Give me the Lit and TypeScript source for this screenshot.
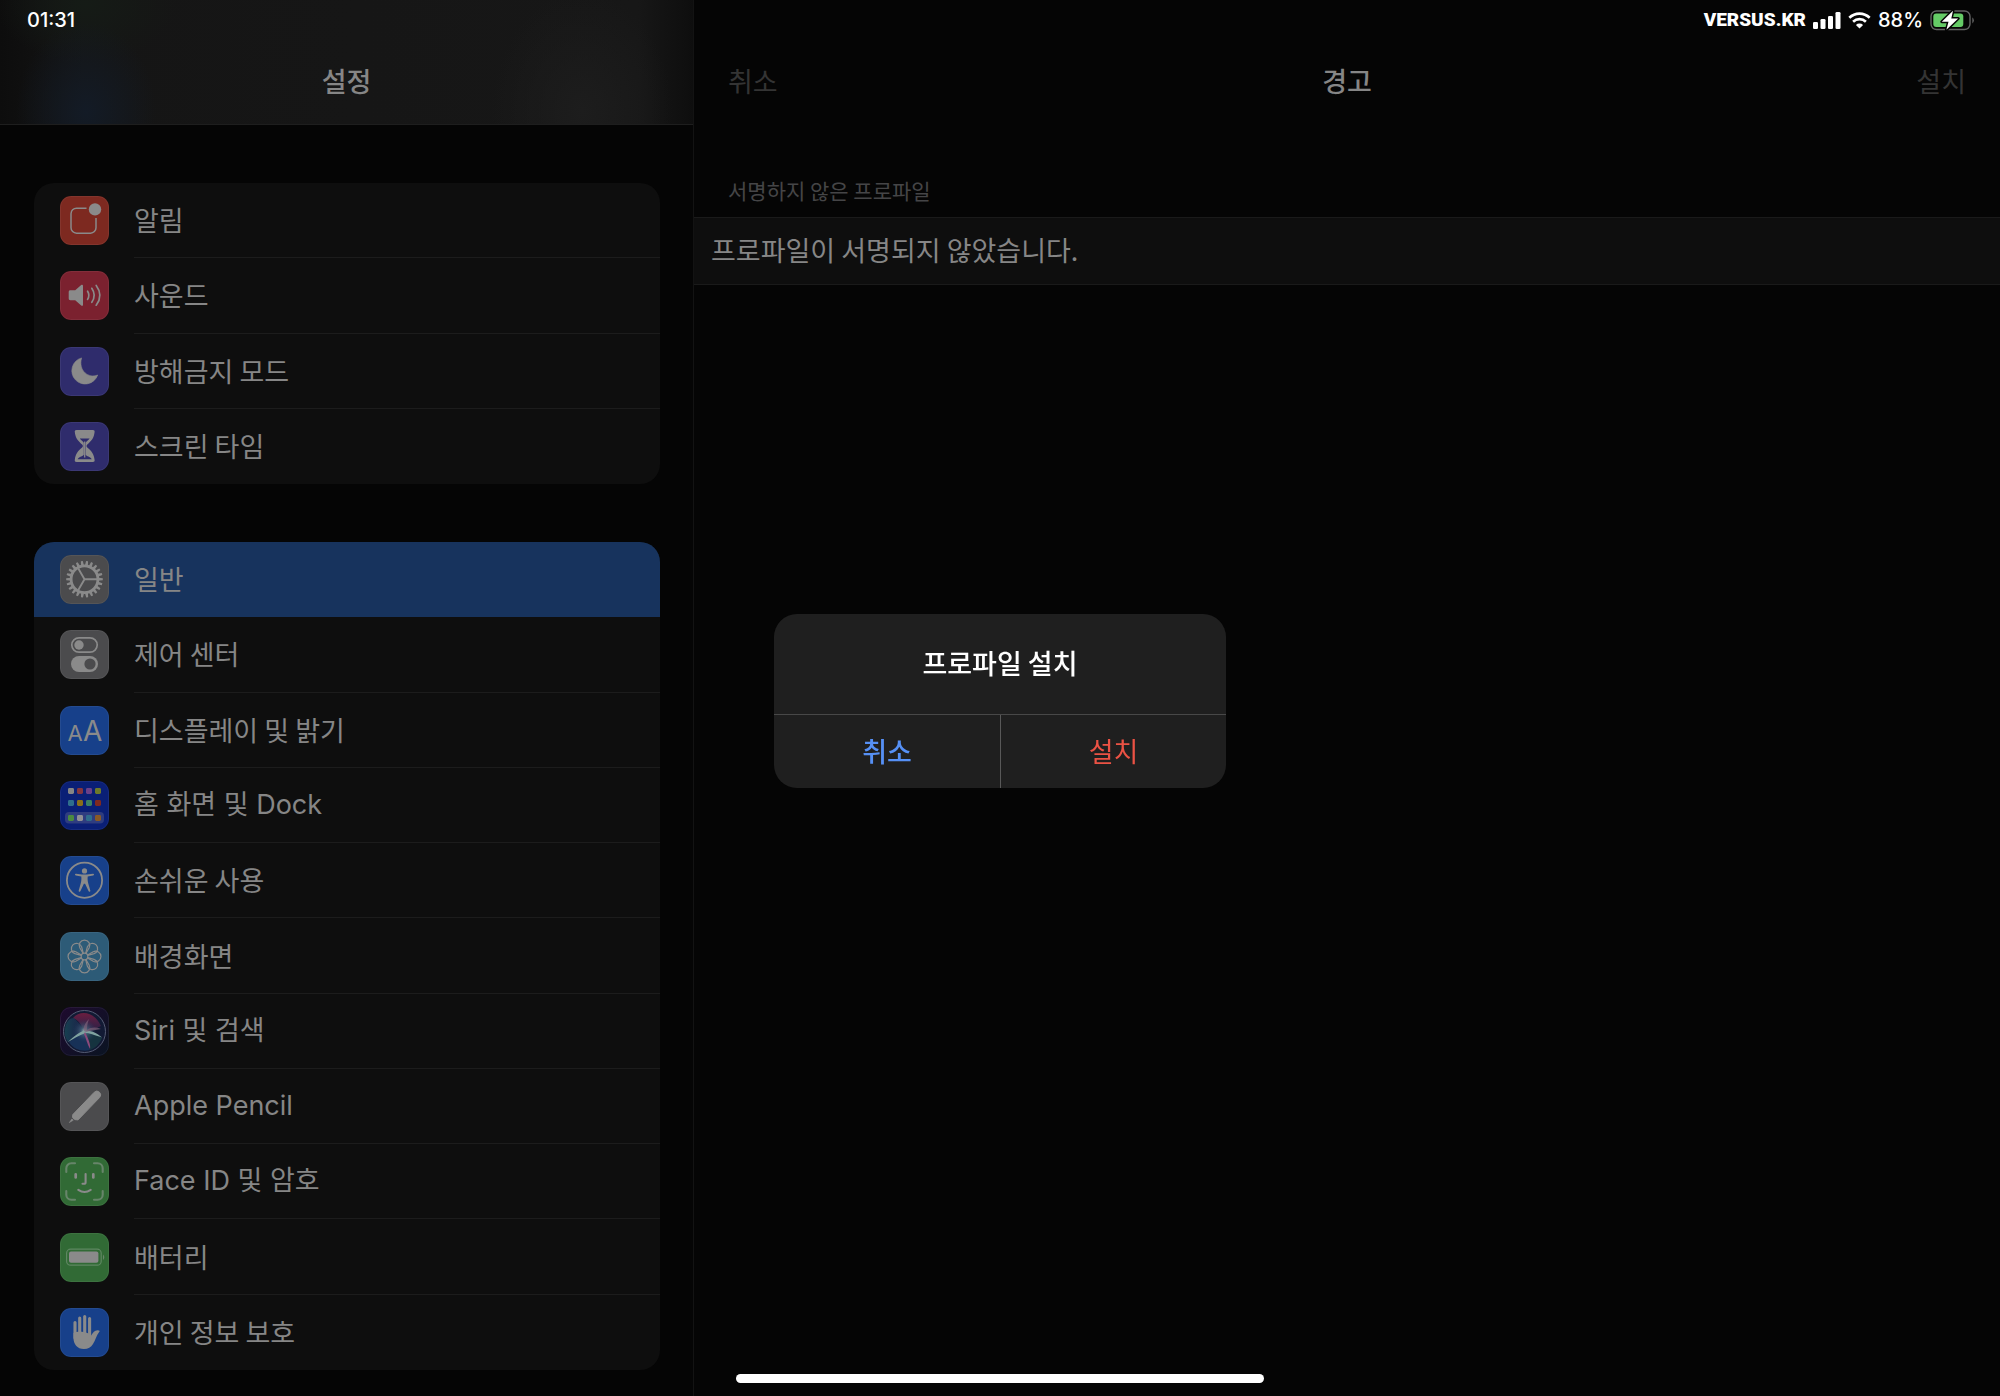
import { LitElement, html, svg, css, TemplateResult, SVGTemplateResult } from "lit";
import { customElement, property, state } from "lit/decorators.js";
import { classMap } from "lit/directives/class-map.js";

interface Item {
  id: string;
  label: string;
}

const GROUPS: Item[][] = [
  [
    { id: "notifications", label: "알림" },
    { id: "sounds", label: "사운드" },
    { id: "dnd", label: "방해금지 모드" },
    { id: "screentime", label: "스크린 타임" },
  ],
  [
    { id: "general", label: "일반" },
    { id: "control", label: "제어 센터" },
    { id: "display", label: "디스플레이 및 밝기" },
    { id: "home", label: "홈 화면 및 Dock" },
    { id: "accessibility", label: "손쉬운 사용" },
    { id: "wallpaper", label: "배경화면" },
    { id: "siri", label: "Siri 및 검색" },
    { id: "pencil", label: "Apple Pencil" },
    { id: "faceid", label: "Face ID 및 암호" },
    { id: "battery", label: "배터리" },
    { id: "privacy", label: "개인 정보 보호" },
  ],
];

const TILE: Record<string, string> = {
  notifications: "#7d2920",
  sounds: "#7b212f",
  dnd: "#2f2c6c",
  screentime: "#2f2c6c",
  general: "#4b4b4d",
  control: "#4b4b4d",
  display: "#17408a",
  home: "#0a1f76",
  accessibility: "#17408a",
  wallpaper: "#2d5b77",
  siri: "#12102a",
  pencil: "#4b4b4d",
  faceid: "#316a35",
  battery: "#316a35",
  privacy: "#17408a",
};

const INK = "#8a8a8a";

const range = (n: number) => Array.from({ length: n }, (_, i) => i);

const gearTeeth = range(22).map(
  (i) => svg`<path d="M22.900 11.500L23.500 5.900H25.500L26.100 11.500Z" fill=${INK} transform=${`rotate(${(i * 360) / 22 + 8} 24.5 24.2)`}/>`
);

const homeDots = [
  ["#858585", "#84363f", "#6a4089", "#6d7a2a"],
  ["#2f6d8c", "#8a6f1a", "#3c7f63", "#80291f"],
  ["#4b8a40", "#909094", "#2f6d8c", "#8a5a26"],
].flatMap((row, r) =>
  row.map(
    (c, k) =>
      svg`<rect x=${[8, 17, 26, 35][k]} y=${[7, 19, 34][r]} width="6" height="6" rx="1.4" fill=${c}/>`
  )
);

const GLYPH: Record<string, SVGTemplateResult> = {
  notifications: svg`
    <path d="M26.5 12.2H16.5a5.5 5.5 0 0 0-5.5 5.5v14a5.5 5.5 0 0 0 5.5 5.5h14a5.5 5.5 0 0 0 5.5-5.5V22" fill="none" stroke=${INK} stroke-width="1.5"/>
    <circle cx="35" cy="13.4" r="6.2" fill=${INK}/>`,
  sounds: svg`
    <path d="M10.4 19.3h4.8l6-5.2c.9-.7 1.8-.4 1.8.7v19c0 1.100-.9 1.400-1.800.700l-6-5.200h-4.800c-1.100 0-1.700-.600-1.700-1.700v-6.600c0-1.100.600-1.700 1.700-1.700z" fill=${INK}/>
    <path d="M27.600 20.200q2.500 4.100 0 8.200M31.800 17.300q4.800 7 0 14M36.200 14.400q7.400 9.900 0 19.800" fill="none" stroke=${INK} stroke-width="1.700" stroke-linecap="round"/>`,
  dnd: svg`<path d="M21.600 10.900A13.300 13.300 0 1 0 37.700 28C28.500 31.800 18 23.500 21.600 10.900Z" fill=${INK} stroke=${INK} stroke-width=".6" stroke-linejoin="round"/>`,
  screentime: svg`
    <path d="M16.500 8h16.400c1.300 0 2 .900 1.700 2.100-.6 6-3.200 9-7.300 12.400-1 .900-1 2.200 0 3.100 4.100 3.400 6.700 6.400 7.300 12.400.3 1.200-.4 2-1.700 2H16.500c-1.300 0-2-.8-1.700-2 .6-6 3.200-9 7.300-12.400 1-.9 1-2.200 0-3.100C18 19.100 15.400 16.100 14.800 10.100 14.500 8.900 15.200 8 16.500 8z" fill=${INK}/>
    <path d="M19.800 16.600h9.800c-1.200 1.800-3.300 2.800-4 4.200v12c1 1.800 4.400 1.700 6.200 4.400H17.600c1.800-2.700 5.200-2.600 6.200-4.400v-12c-.7-1.400-2.800-2.400-4-4.200z" fill="#2f2c6c"/>
    <path d="M24.700 19.500v16" stroke=${INK} stroke-width="1.300"/>`,
  general: svg`
    ${gearTeeth}
    <circle cx="24.500" cy="24.200" r="13.400" fill="none" stroke=${INK} stroke-width="2.800"/>
    <path d="M24.500 24.200H37M24.500 24.200L18.300 13.500M24.500 24.200L18.300 34.900" stroke=${INK} stroke-width="1.900"/>`,
  control: svg`
    <rect x="11.800" y="7.800" width="25.400" height="14.400" rx="7.200" fill="none" stroke=${INK} stroke-width="1.700"/>
    <circle cx="19" cy="15" r="4.700" fill=${INK}/>
    <rect x="11" y="26" width="27" height="16" rx="8" fill=${INK}/>
    <circle cx="30" cy="34" r="5.600" fill="#4b4b4d"/>`,
  display: svg`
    <text x="7.600" y="34.600" font-size="22" fill=${INK} font-family="Inter, sans-serif">A</text>
    <text x="23" y="34.600" font-size="28" fill=${INK} font-family="Inter, sans-serif">A</text>`,
  home: svg`<rect x="5" y="31" width="39" height="11.500" rx="4" fill="#2f3d80"/>${homeDots}`,
  accessibility: svg`
    <circle cx="24.500" cy="24.200" r="17.600" fill="none" stroke=${INK} stroke-width="1.800"/>
    <circle cx="24.500" cy="14.900" r="2.600" fill=${INK}/>
    <path d="M16 17.800l6 .8h5l6-.8c1.300-.1 1.400 1.500.2 1.700l-5.500 1.100c-.4 3.500.2 6.300 1.300 9.300l1.300 4.500c.3 1.400-1.300 1.800-1.800.6L25.100 27.800h-1.200L20.500 35c-.5 1.200-2.100.8-1.800-.6L20 29.900c1.100-3 1.700-5.800 1.300-9.300l-5.500-1.100c-1.200-.2-1.100-1.800.2-1.700z" fill=${INK}/>`,
  wallpaper: svg`${range(8).map(
    (i) =>
      svg`<path d="M23.100 21.400L19.800 15.800A5.300 5.300 0 1 1 29.200 15.800L25.900 21.400" fill="none" stroke=${INK} stroke-width="1.200" transform=${`rotate(${i * 45} 24.500 24.500)`}/>`
  )}<circle cx="24.500" cy="24.500" r="3.300" fill="none" stroke=${INK} stroke-width="1.200"/>`,
  siri: svg`
    <defs>
      <linearGradient id="sb" x1="0" y1="0" x2="1" y2="1"><stop offset="0" stop-color="#1e0a2e"/><stop offset="1" stop-color="#0a1422"/></linearGradient>
      <radialGradient id="sc"><stop offset="0" stop-color="#9dbcbc"/><stop offset=".3" stop-color="#4b6c82" stop-opacity=".7"/><stop offset="1" stop-color="#1d3158" stop-opacity="0"/></radialGradient>
      <linearGradient id="sr" x1="0" y1="0" x2="0" y2="1"><stop offset="0" stop-color="#6c1d3e"/><stop offset="1" stop-color="#4a2454" stop-opacity=".5"/></linearGradient>
      <linearGradient id="sl" x1="0" y1="0" x2="1" y2="0"><stop offset="0" stop-color="#16404f"/><stop offset="1" stop-color="#23305f" stop-opacity=".4"/></linearGradient>
    </defs>
    <rect width="49" height="49" fill="url(#sb)"/>
    <circle cx="24.500" cy="24.500" r="21" fill="#121a34"/>
    <path d="M13 11C20 3 34 4 41 19 34 23 29 23 24 24 22 19 19 13 13 11Z" fill="url(#sr)"/>
    <path d="M5 22C6 14 10 11 14 11 19 16 22 20 24 24L8 35C5 31 4 26 5 22Z" fill="url(#sl)"/>
    <path d="M24 24L9 35C14 43 23 45 30 43Z" fill="#193c66" opacity=".7"/>
    <path d="M24 24C32 24 38 28 42 31 39 38 35 41 30 43Z" fill="#173a42" opacity=".8"/>
    <circle cx="24.500" cy="24" r="12" fill="url(#sc)"/>
    <path d="M8 35C15 28 20 25 24 23.500 32 23 38 27 42 30.500 34 28 29 26 25.500 26 19 28.500 13 32 8 35Z" fill="#7fa3a0"/>
    <path d="M25 25C28.500 32 31 38 30 42 27.500 38 26 31 24 27Z" fill="#8c4a7c"/>
    <path d="M24 24C23 20 25 16 29 12 27 17 27 20 27 23 31 20 36 20 41 22 35 23 30 24 26 25Z" fill="#7c6078" opacity=".7"/>
    <circle cx="24.500" cy="24.500" r="21" fill="none" stroke="#565d74" stroke-width="1"/>`,
  pencil: svg`
    <path d="M12.800 32.600L34.200 10.300a3.700 3.700 0 0 1 5.300 5.300L18 37.900 14.700 37.600 12.500 35.400Z" fill=${INK} stroke=${INK} stroke-width="1" stroke-linejoin="round"/>
    <path d="M12 36.800L9.300 40.600 13.300 38.200Z" fill=${INK} stroke=${INK} stroke-width=".6"/>`,
  faceid: svg`
    <g fill="none" stroke-linecap="round" stroke-width="2.100">
      <path d="M6.300 15V11.300a5 5 0 0 1 5-5H15M34 6.300h3.700a5 5 0 0 1 5 5V15M42.700 34v3.700a5 5 0 0 1-5 5H34M15 42.700H11.300a5 5 0 0 1-5-5V34" stroke="#67856a"/>
      <path d="M15.700 17.300v3.200M33.300 17.300v3.200" stroke=${INK} stroke-width="2.700"/>
      <path d="M25.600 17v8.200q0 1.600-1.700 1.600h-1.400M18.300 32.800q6.200 4.400 12.400 0" stroke=${INK}/>
    </g>`,
  battery: svg`
    <rect x="6.600" y="16.200" width="34.600" height="16" rx="4" fill="none" stroke="#5f8762" stroke-width="1.200"/>
    <rect x="9" y="18.600" width="29.400" height="11.200" rx="2" fill=${INK}/>
    <path d="M43 21.500q2.600 2.700 0 5.600z" fill="#67856a"/>`,
  privacy: svg`
    <path d="M15 14.500V30M19.700 10V26M24.700 8.500V26M29.600 10.500V28" stroke=${INK} stroke-width="3.100" stroke-linecap="round"/>
    <path d="M13.500 25C17 23 28 23 31.100 27.500C33 24.500 34.500 22.500 37.500 22.300 39.500 22.200 40.300 23 39 24.200 36.500 27 35.500 32 33 36 31 39.500 28 41 24 41 17 41 13.500 36 13.500 30Z" fill=${INK}/>`,
};

@customElement("setting-icon")
class SettingIcon extends LitElement {
  @property() name = "general";

  static styles = css`
    :host {
      display: block;
      flex: none;
      width: 49px;
      height: 49px;
    }
    .tile {
      display: block;
      width: 49px;
      height: 49px;
      border-radius: 11px;
    }
    .edge {
      fill: none;
      stroke: #ffffff;
      stroke-opacity: 0.06;
    }
  `;

  render(): TemplateResult {
    return html`<svg class="tile" viewBox="0 0 49 49" aria-hidden="true">
      <rect width="49" height="49" fill=${TILE[this.name]}></rect>
      ${GLYPH[this.name]}
      <rect class="edge" x=".5" y=".5" width="48" height="48" rx="10.500"></rect>
    </svg>`;
  }
}

@customElement("app-root")
class AppRoot extends LitElement {
  @state() private selected = "general";
  @state() private alertOpen = true;

  static styles = css`
    :host {
      display: block;
      font-family: Inter, "Noto Sans CJK KR", sans-serif;
      font-size: 27px;
      line-height: 40px;
      color: #868686;
      background: #050505;
    }
    * {
      box-sizing: border-box;
    }
    h1,
    h2,
    p,
    ul {
      margin: 0;
      padding: 0;
      font-size: inherit;
    }
    button {
      border: 0;
      padding: 0;
      background: none;
      color: inherit;
      font: inherit;
      cursor: pointer;
    }
    .ko {
      font-family: "Noto Sans CJK KR", sans-serif;
    }
    .page {
      display: grid;
      grid-template-columns: minmax(320px, 694px) minmax(0, 1306fr);
      min-height: 100vh;
    }
    .sidebar {
      display: flex;
      flex-direction: column;
      border-right: 1px solid #131313;
    }
    .side-head {
      flex: none;
      height: 125px;
      border-bottom: 1px solid #1e1e1e;
      background:
        radial-gradient(ellipse 70px 90px at 86px 112px, #131b26, transparent),
        radial-gradient(ellipse 90px 60px at 86px 4px, #151b16, transparent),
        radial-gradient(ellipse 90px 120px at 84% 90%, #1d1d1d, transparent),
        linear-gradient(90deg, #0d0d0d, #151515 12%, #171717 92%, #0e0e0e);
    }
    .status {
      display: flex;
      align-items: center;
      height: 40px;
      font-family: Inter, sans-serif;
      font-size: 20px;
      line-height: 24px;
      font-weight: 500;
      color: #ffffff;
    }
    .side-head .status {
      padding-left: 27px;
    }
    .detail .status {
      justify-content: flex-end;
      gap: 7px;
      padding-right: 25px;
    }
    .carrier {
      font-family: Roboto, sans-serif;
      font-weight: 900;
      font-size: 19px;
    }
    .status svg {
      display: block;
    }
    .title {
      display: grid;
      place-items: center;
      height: 82px;
      font-weight: 500;
    }
    .groups {
      flex: 1;
      display: flex;
      flex-direction: column;
      gap: 58px;
      padding: 58px 33px 26px 34px;
    }
    .group {
      display: flex;
      flex-direction: column;
      overflow: hidden;
      list-style: none;
      border-radius: 20px;
      background: #0e0e0e;
    }
    .cell {
      flex: 1;
      display: flex;
      min-height: 64px;
    }
    .row {
      flex: 1;
      display: flex;
      align-items: center;
      gap: 25px;
      padding-left: 26px;
      color: inherit;
      text-decoration: none;
    }
    .label {
      flex: 1;
      align-self: stretch;
      display: flex;
      align-items: center;
      border-bottom: 1px solid #1c1c1c;
    }
    .cell:last-child .label,
    .selected .label {
      border-color: transparent;
    }
    .selected {
      background: #17335d;
    }
    .nav {
      display: grid;
      grid-template-columns: 1fr auto 1fr;
      align-items: center;
      height: 82px;
      padding: 0 34px;
    }
    .nav button {
      justify-self: start;
      color: #343434;
    }
    .nav button:last-child {
      justify-self: end;
    }
    .nav h2 {
      font-weight: 500;
    }
    .caption {
      padding: 53px 34px 12px;
      font-size: 21px;
      line-height: 30px;
      color: #454547;
    }
    .notice {
      padding: 12px 17px 14px;
      border: solid #1a1a1a;
      border-width: 1px 0;
      background: #0e0e0e;
    }
    .overlay {
      position: fixed;
      inset: 6px 0 0;
      display: grid;
      place-items: center;
      pointer-events: none;
    }
    .alert {
      width: 452px;
      overflow: hidden;
      border-radius: 23px;
      background: #1f1f1f;
      color: #ffffff;
      pointer-events: auto;
    }
    .alert h2 {
      padding: 29px 24px 31px;
      text-align: center;
      font-weight: 500;
    }
    .actions {
      display: grid;
      grid-template-columns: 1fr 1fr;
      border-top: 1px solid #484848;
    }
    .actions button {
      height: 73px;
      padding-bottom: 2px;
    }
    .cancel {
      color: #5690f5;
      font-weight: 500;
    }
    .actions .install {
      border-left: 1px solid #585858;
      color: #eb5244;
    }
    .home-bar {
      position: fixed;
      left: 50%;
      bottom: 13px;
      width: 528px;
      height: 9px;
      margin-left: -264px;
      border-radius: 5px;
      background: #ffffff;
    }
  `;

  private renderItem(item: Item): TemplateResult {
    const ko = !/[A-Za-z]/.test(item.label);
    return html`<li class="cell">
      <a
        href=${"#" + item.id}
        class=${classMap({ row: true, selected: item.id === this.selected })}
        @click=${() => (this.selected = item.id)}
      >
        <setting-icon name=${item.id}></setting-icon>
        <span class=${classMap({ label: true, ko })}>${item.label}</span>
      </a>
    </li>`;
  }

  private close = () => {
    this.alertOpen = false;
  };

  render(): TemplateResult {
    return html`
      <div class="page">
        <nav class="sidebar">
          <header class="side-head">
            <div class="status">01:31</div>
            <h1 class="title ko">설정</h1>
          </header>
          <div class="groups">
            ${GROUPS.map(
              (g) => html`<ul class="group" style="flex-grow:${g.length}">
                ${g.map((i) => this.renderItem(i))}
              </ul>`
            )}
          </div>
        </nav>
        <main class="detail ko">
          <div class="status">
            <span class="carrier">VERSUS.KR</span>
            <svg width="28" height="17" viewBox="0 0 28 17" fill="#fff" aria-hidden="true">
              <rect x="0" y="10" width="5" height="7" rx="1.300"></rect>
              <rect x="7.500" y="7" width="5" height="10" rx="1.300"></rect>
              <rect x="15" y="4" width="5" height="13" rx="1.300"></rect>
              <rect x="22.500" y="0" width="5" height="17" rx="1.300"></rect>
            </svg>
            <svg width="23" height="17" viewBox="0 0 23 17" aria-hidden="true">
              <path d="M1.300 5.800a14.600 14.600 0 0 1 20.400 0M5.100 9.700a9.200 9.200 0 0 1 12.800 0" fill="none" stroke="#fff" stroke-width="2.600"></path>
              <path d="M7.900 12.900a5.200 5.200 0 0 1 7.200 0L11.500 16.500z" fill="#fff"></path>
            </svg>
            <span class="percent">88%</span>
            <svg width="45" height="21" viewBox="0 0 45 21" aria-hidden="true">
              <rect x="1" y="1" width="39" height="18.500" rx="5.500" fill="none" stroke="#636363" stroke-width="1.400"></rect>
              <rect x="3.300" y="3.500" width="30" height="13.600" rx="3" fill="#65cb66"></rect>
              <path d="M42.300 7.200q3.200 3.200 0 6.400z" fill="#636363"></path>
              <path d="M23 .8L11.800 11.800H18.500L16.400 19.800 28.200 8.500H21.300Z" fill="#fff" stroke="#050505" stroke-width="3" stroke-linejoin="round" paint-order="stroke"></path>
            </svg>
          </div>
          <div class="nav">
            <button type="button">취소</button>
            <h2>경고</h2>
            <button type="button">설치</button>
          </div>
          <p class="caption">서명하지 않은 프로파일</p>
          <p class="notice">프로파일이 서명되지 않았습니다.</p>
        </main>
      </div>
      ${this.alertOpen
        ? html`<div class="overlay">
            <section class="alert ko" role="alertdialog" aria-labelledby="alert-title">
              <h2 id="alert-title">프로파일 설치</h2>
              <div class="actions">
                <button type="button" class="cancel" @click=${this.close}>취소</button>
                <button type="button" class="install" @click=${this.close}>설치</button>
              </div>
            </section>
          </div>`
        : null}
      <div class="home-bar"></div>
    `;
  }
}
